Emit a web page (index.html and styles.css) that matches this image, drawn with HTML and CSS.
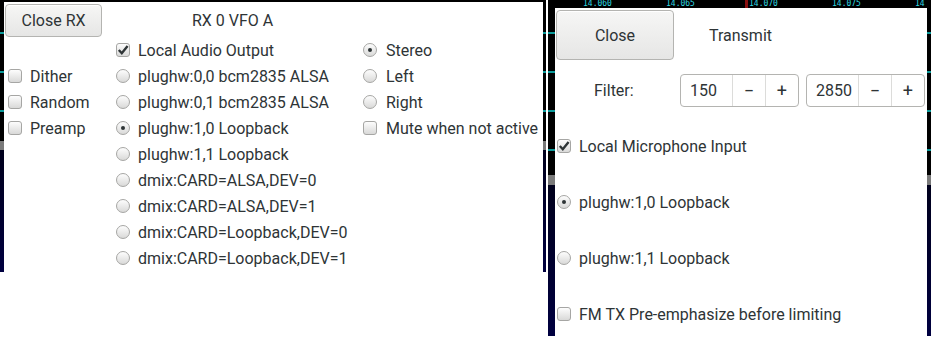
FILE: index.html
```html
<!DOCTYPE html>
<html lang="en">
  <head>
    <meta charset="UTF-8" />
    <title>RX / TX Settings</title>
    <link rel="stylesheet" href="styles.css">
  </head>
  <body>
    <div class="screen">
      <!-- receiver dialog -->
      <div class="shot shot-rx">
        <div class="dialog rx">
          <div class="rx-head">
            <button class="btn btn-rx">Close RX</button>
            <span class="title rx-title">RX 0 VFO A</span>
          </div>
          <div class="rx-body">
            <div class="col col-opts">
              <label class="opt"><span class="box"></span>Dither</label>
              <label class="opt"><span class="box"></span>Random</label>
              <label class="opt"><span class="box"></span>Preamp</label>
            </div>
            <div class="col col-dev">
              <label class="opt"><span class="box checked"><svg viewBox="0 0 14 14"><path d="M2.8 7 L5.8 10.2 L11.6 3" /></svg></span>Local Audio Output</label>
              <label class="opt"><span class="radio"></span>plughw:0,0 bcm2835 ALSA</label>
              <label class="opt"><span class="radio"></span>plughw:0,1 bcm2835 ALSA</label>
              <label class="opt"><span class="radio on"></span>plughw:1,0 Loopback</label>
              <label class="opt"><span class="radio"></span>plughw:1,1 Loopback</label>
              <label class="opt"><span class="radio"></span>dmix:CARD=ALSA,DEV=0</label>
              <label class="opt"><span class="radio"></span>dmix:CARD=ALSA,DEV=1</label>
              <label class="opt"><span class="radio"></span>dmix:CARD=Loopback,DEV=0</label>
              <label class="opt"><span class="radio"></span>dmix:CARD=Loopback,DEV=1</label>
            </div>
            <div class="col col-chan">
              <label class="opt"><span class="radio on"></span>Stereo</label>
              <label class="opt"><span class="radio"></span>Left</label>
              <label class="opt"><span class="radio"></span>Right</label>
              <label class="opt"><span class="box"></span>Mute when not active</label>
            </div>
          </div>
        </div>
      </div>

      <!-- transmit dialog -->
      <div class="shot shot-tx">
        <div class="scale">
          <span>14.060</span>
          <span>14.065</span>
          <span class="mark">14.070</span>
          <span>14.075</span>
          <span>14</span>
        </div>
        <div class="dialog tx">
          <div class="tx-head">
            <button class="btn btn-close">Close</button>
            <span class="title tx-title">Transmit</span>
          </div>
          <div class="filter-row">
            <span class="filter-label">Filter:</span>
            <div class="spin">
              <span class="spin-val">150</span>
              <span class="spin-btn">&minus;</span>
              <span class="spin-btn">+</span>
            </div>
            <div class="spin">
              <span class="spin-val">2850</span>
              <span class="spin-btn">&minus;</span>
              <span class="spin-btn">+</span>
            </div>
          </div>
          <div class="tx-list">
            <label class="opt"><span class="box checked"><svg viewBox="0 0 14 14"><path d="M2.8 7 L5.8 10.2 L11.6 3" /></svg></span>Local Microphone Input</label>
            <label class="opt"><span class="radio on"></span>plughw:1,0 Loopback</label>
            <label class="opt"><span class="radio"></span>plughw:1,1 Loopback</label>
            <label class="opt"><span class="box"></span>FM TX Pre-emphasize before limiting</label>
          </div>
        </div>
      </div>
    </div>
  </body>
</html>
```

FILE: styles.css
```css
body {
  margin: 0;
  background-color: #fff;
  font-family: "Roboto", "Noto Sans", sans-serif;
  font-size: 16px;
  color: #2e3436;
}

.screen {
  display: flex;
  align-items: flex-start;
  gap: 2px;
}

/* black spectrum frame behind each dialog */
.shot {
  background-color: #000;
  background-image:
    repeating-linear-gradient(to bottom, transparent 0, transparent 32px, #0b9a9a 32px, #0b9a9a 34px, transparent 34px, transparent 39px),
    linear-gradient(to bottom, #000 0, #000 52%, #7a7a7a 52%, #7a7a7a 55%, #00001c 55%, #000040 100%);
  background-size: 100% 45%, 100% 100%;
  background-repeat: no-repeat;
  overflow: hidden;
}

.shot-rx {
  width: 546px;
  height: 272px;
  padding: 2px 3px 0 4px;
  box-sizing: border-box;
}

.shot-tx {
  width: 383px;
  height: 336px;
  padding: 0 4px 0 7px;
  box-sizing: border-box;
  display: flex;
  flex-direction: column;
}

.scale {
  height: 8px;
  display: flex;
  padding-left: 28px;
  font-family: "DejaVu Sans Mono", monospace;
  font-size: 8px;
  line-height: 8px;
  color: #2fd8e0;
}

.scale span {
  flex: none;
  width: 83px;
}

.scale span:last-child {
  width: auto;
}

.scale .mark {
  border-left: 3px solid #8a1010;
  margin-left: -4px;
  padding-left: 1px;
}

.dialog {
  background-color: #fff;
}

.rx {
  height: 270px;
}

.tx {
  flex: 1;
  overflow: hidden;
}

.btn {
  font-family: inherit;
  font-size: 16px;
  color: #2e3436;
  background: linear-gradient(to bottom, #f6f6f5, #e6e6e5);
  border: 1px solid #b4b4b1;
  border-radius: 4px;
  box-shadow: inset 0 1px #fff;
  padding: 0;
}

.rx-head {
  display: flex;
  align-items: center;
  height: 35px;
  padding: 2px 0 0 1px;
  box-sizing: border-box;
}

.btn-rx {
  width: 97px;
  height: 33px;
}

.rx-title {
  margin-left: 90px;
}

.rx-body {
  display: flex;
}

.col {
  display: flex;
  flex-direction: column;
}

.col-opts {
  width: 108px;
  padding: 26px 0 0 4px;
}

.col-dev {
  width: 247px;
}

.opt {
  display: flex;
  align-items: center;
  gap: 8px;
  height: 26px;
  white-space: nowrap;
}

.col-chan .opt {
  gap: 9px;
}

.box,
.radio {
  flex: none;
  width: 14px;
  height: 14px;
  box-sizing: border-box;
  border: 1px solid #a6a6a4;
  background: linear-gradient(to bottom, #fdfdfd, #d9d9d8);
  display: flex;
  align-items: center;
  justify-content: center;
}

.box {
  border-radius: 3px;
}

.box svg {
  width: 14px;
  height: 14px;
  flex: none;
}

.box path {
  fill: none;
  stroke: #2e3436;
  stroke-width: 2.4;
}

.radio {
  border-radius: 50%;
}

.radio.on::after {
  content: "";
  width: 4px;
  height: 4px;
  border-radius: 50%;
  background-color: #2e3436;
}

/* transmit dialog */
.tx-head {
  display: flex;
  align-items: center;
  padding: 2px 0 0 1px;
}

.btn-close {
  width: 118px;
  height: 50px;
}

.tx-title {
  margin-left: 35px;
}

.filter-row {
  display: flex;
  align-items: center;
  gap: 7px;
  margin-top: 14px;
  height: 33px;
}

.filter-label {
  width: 79px;
  padding-left: 39px;
}

.spin {
  display: flex;
  width: 119px;
  height: 33px;
  box-sizing: border-box;
  border: 1px solid #b4b4b1;
  border-radius: 4px;
}

.spin-val {
  width: 52px;
  padding-left: 9px;
  box-sizing: border-box;
  display: flex;
  align-items: center;
}

.spin-btn {
  width: 33px;
  border-left: 1px solid #dcdcda;
  display: flex;
  align-items: center;
  justify-content: center;
  font-size: 18px;
}

.tx-list {
  margin-top: 11px;
  padding-left: 2px;
}

.tx-list .opt {
  height: 56px;
}
```
